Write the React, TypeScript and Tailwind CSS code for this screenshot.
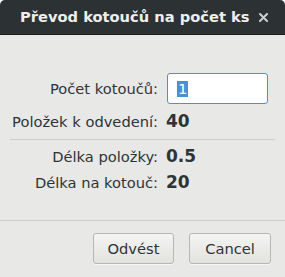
import React from 'react'

const font = { fontFamily: '"DejaVu Sans", "Liberation Sans", sans-serif' }

const Row = ({ label, value }: { label: string; value: string }) => (
  <div className="flex h-[22px] items-center">
    <span className="w-[148px] text-right text-[14.67px] text-[#2e3436]">{label}</span>
    <span className="ml-[8px] text-[17px] font-bold text-[#2e3436]">{value}</span>
  </div>
)

export default function App() {
  return (
    <div className="flex h-[277px] w-[285px] flex-col bg-white" style={font}>
      {/* title bar */}
      <div className="flex h-[35px] items-center rounded-t-[5px] border-b border-[#1c1f20] bg-[#2c3133] pl-[20px]">
        <span className="text-[14.67px] font-bold text-[#eeeeec]">Převod kotoučů na počet ks</span>
        <svg width="9" height="9" viewBox="0 0 9 9" className="ml-[10px] mt-px">
          <path d="M1 1 L8 8 M8 1 L1 8" stroke="#cfd1d0" strokeWidth="2" strokeLinecap="round" />
        </svg>
      </div>

      <div className="flex flex-1 flex-col bg-[#e8e8e7]">
        <div className="px-[10px] pt-[38px]">
          <div className="flex h-[31px] items-center">
            <span className="w-[148px] text-right text-[14.67px] text-[#2e3436]">Počet kotoučů:</span>
            <div className="ml-[9px] flex h-[31px] w-[101px] items-center rounded-[3px] border border-[#4a90d9] bg-white pl-[9px]">
              <span className="bg-[#4a90d9] px-px text-[14.67px] leading-[16px] text-white">1</span>
            </div>
          </div>
          <div className="mt-[7px]">
            <Row label="Položek k odvedení:" value="40" />
          </div>
          <div className="mt-[6px] h-px bg-[#cdcdcb]" />
          <div className="mt-[6px]">
            <Row label="Délka položky:" value="0.5" />
          </div>
          <div className="mt-[4px]">
            <Row label="Délka na kotouč:" value="20" />
          </div>
        </div>

        <div className="mt-[26px] h-px bg-[#cdcdcb]" />

        <div className="mt-[12px] flex justify-end gap-[15px] pr-[14px]">
          <button className="h-[31px] w-[81px] rounded-[3px] border border-[#b6b6b3] bg-gradient-to-b from-[#f4f4f3] to-[#e2e2df] text-[14.67px] text-[#2e3436] shadow-[0_1px_0_rgba(255,255,255,0.6)]">
            Odvést
          </button>
          <button className="h-[31px] w-[82px] rounded-[3px] border border-[#b6b6b3] bg-gradient-to-b from-[#f4f4f3] to-[#e2e2df] text-[14.67px] text-[#2e3436] shadow-[0_1px_0_rgba(255,255,255,0.6)]">
            Cancel
          </button>
        </div>
      </div>
    </div>
  )
}
